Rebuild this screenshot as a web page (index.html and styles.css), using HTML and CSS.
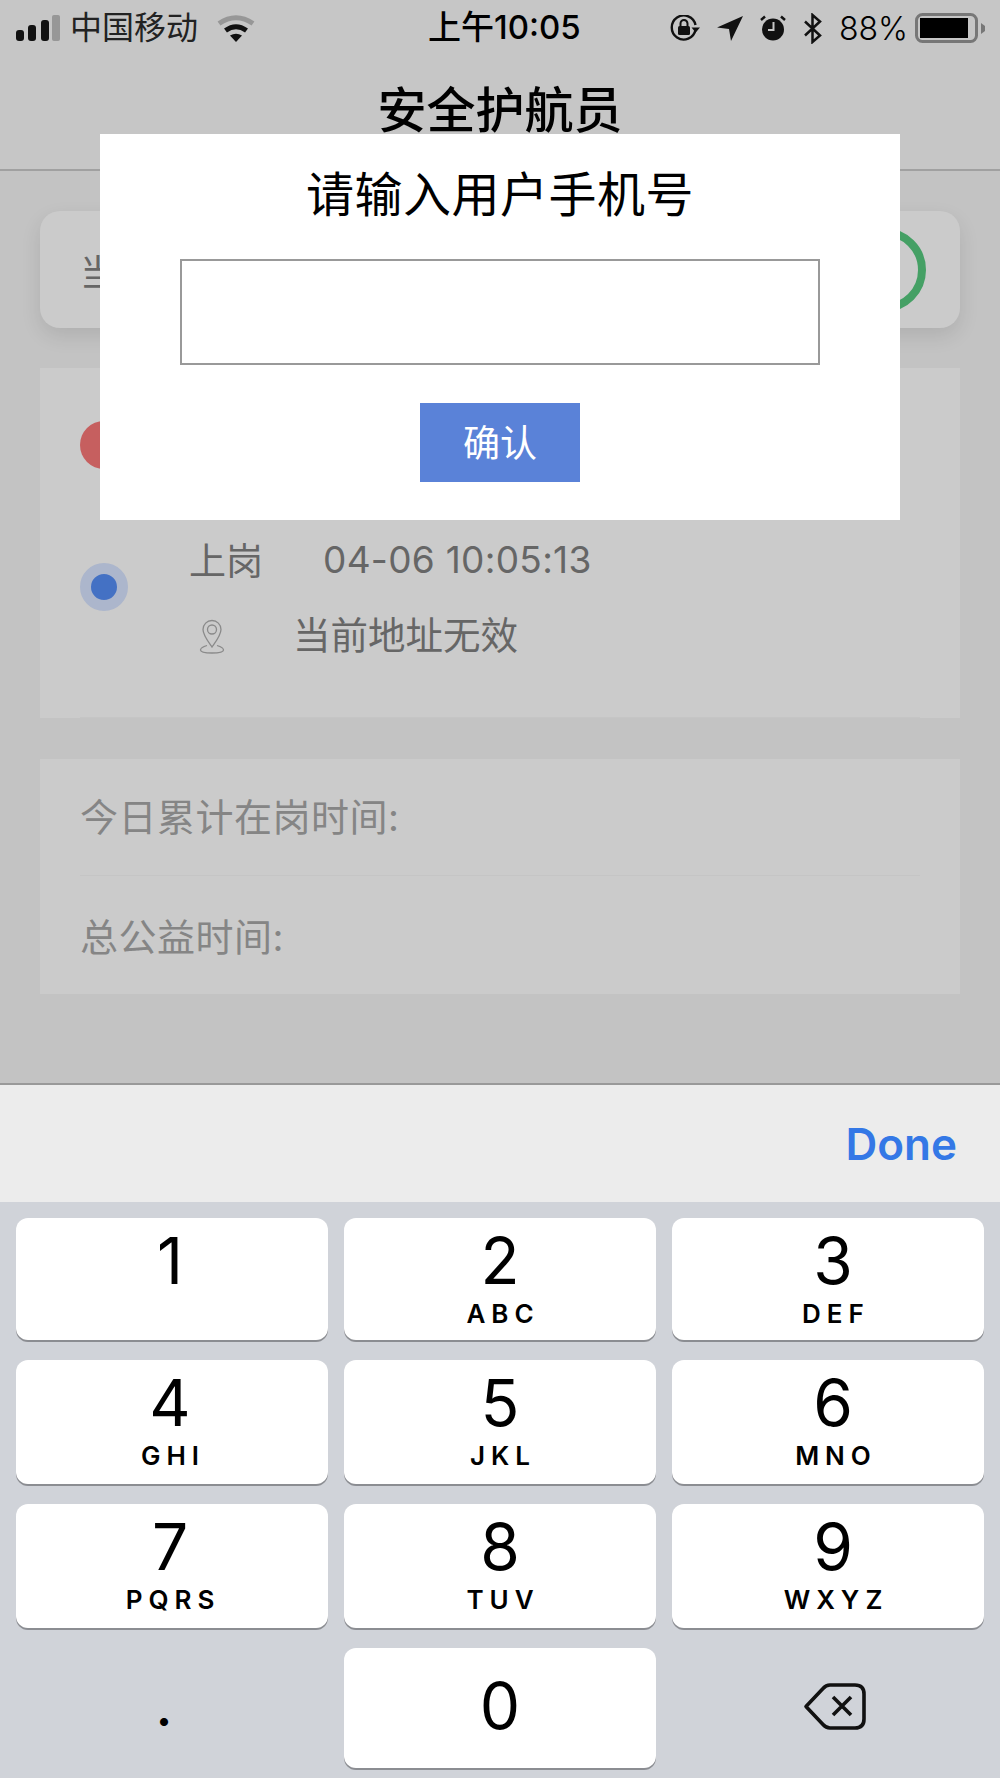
FILE: index.html
```html
<!DOCTYPE html>
<html lang="zh-CN">

<head>
    <meta charset="UTF-8">
    <meta name="viewport" content="width=device-width, initial-scale=1.0">
    <title>安全护航员</title>
    <link rel="stylesheet" href="styles.css">
</head>

<body>
    <div class="status-bar">
        <div class="status-left">
            <svg class="signal" width="44" height="26" viewBox="0 0 44 26">
                <rect x="0" y="15" width="8" height="11" rx="3" fill="#111"/>
                <rect x="12" y="10" width="8" height="16" rx="3" fill="#111"/>
                <rect x="25" y="5" width="8" height="21" rx="3" fill="#111"/>
                <rect x="36" y="0" width="8" height="26" rx="2" fill="#979797"/>
            </svg>
            <span class="carrier">中国移动</span>
            <svg class="wifi" width="38" height="27" viewBox="0 0 38 27">
                <path d="M2 8.500Q19 -3 36 8.500" fill="none" stroke="#979797" stroke-width="5"/>
                <path d="M8.500 15.500Q19 8 29.500 15.500" fill="none" stroke="#111" stroke-width="5"/>
                <path d="M13 20.500Q19 17 25 20.500L19 27Z" fill="#111"/>
            </svg>
        </div>
        <span class="clock">上午10:05</span>
        <div class="status-right">
            <svg width="30" height="26" viewBox="0 0 30 26">
                <path d="M25.500 15A12 12 0 1 1 25.500 10" fill="none" stroke="#111" stroke-width="2.400"/>
                <path d="M21.500 12.500H30L25.700 17.500Z" fill="#111"/>
                <rect x="8" y="11" width="12" height="9" rx="1.500" fill="#111"/>
                <path d="M10.500 11V8.500A3.500 3.500 0 0 1 17.500 8.500V11" fill="none" stroke="#111" stroke-width="2"/>
            </svg>
            <svg width="26" height="25" viewBox="0 0 26 25">
                <path d="M26 0L0 11.500L12 13L14 25Z" fill="#111"/>
            </svg>
            <svg width="26" height="26" viewBox="0 0 26 26">
                <circle cx="13" cy="14.500" r="11" fill="#111"/>
                <path d="M13.500 7V15H8" fill="none" stroke="#c6c6c6" stroke-width="2"/>
                <path d="M1 5L5 1.500M25 5L21 1.500" stroke="#111" stroke-width="2.500"/>
            </svg>
            <svg width="19" height="31" viewBox="0 0 19 31">
                <path d="M2 8.500L17 22.500L9.500 29V2L17 8.500L2 22.500" fill="none" stroke="#111" stroke-width="2.500"/>
            </svg>
            <span class="battery-text">88%</span>
            <svg width="70" height="30" viewBox="0 0 70 30">
                <rect x="1.500" y="1.500" width="60" height="27" rx="6" fill="none" stroke="#777" stroke-width="3"/>
                <rect x="5" y="5" width="48" height="20" fill="#000"/>
                <path d="M66 10L70 13V18L66 21Z" fill="#777"/>
            </svg>
        </div>
    </div>

    <header class="page-header">
        <h1>安全护航员</h1>
    </header>

    <main class="content">
        <section class="card card-state">
            <span class="state-label">当</span>
            <span class="state-ring"></span>
        </section>

        <section class="card card-log">
            <div class="log-row">
                <span class="log-dot log-dot-red"></span>
            </div>
            <div class="log-row log-row-last">
                <span class="log-dot log-dot-blue"></span>
                <div class="log-body">
                    <div class="log-line">
                        <span class="log-type">上岗</span>
                        <span class="log-time">04-06 10:05:13</span>
                    </div>
                    <div class="log-line">
                        <svg class="pin" width="26" height="36" viewBox="0 0 26 36">
                            <path d="M13 29C8 22 4 17 4 11.500A9 9 0 0 1 22 11.500C22 17 18 22 13 29Z" fill="none" stroke="#8a8a8a" stroke-width="1.300"/>
                            <circle cx="13" cy="11.500" r="4.500" fill="none" stroke="#8a8a8a" stroke-width="1.300"/>
                            <path d="M8 27.500C3 29 1.500 30.500 1.500 32C1.500 34 7 35 13 35C19 35 24.500 34 24.500 32C24.500 30.500 23 29 18 27.500" fill="none" stroke="#8a8a8a" stroke-width="1.300"/>
                        </svg>
                        <span class="log-address">当前地址无效</span>
                    </div>
                </div>
            </div>
        </section>

        <section class="card card-total">
            <div class="total-row">今日累计在岗时间:</div>
            <div class="total-row">总公益时间:</div>
        </section>
    </main>

    <div class="keyboard">
        <div class="keyboard-bar">
            <span class="done">Done</span>
        </div>
        <div class="keypad">
            <div class="key key-left"><span class="digit">1</span></div>
            <div class="key"><span class="digit">2</span><span class="letters">ABC</span></div>
            <div class="key key-right"><span class="digit">3</span><span class="letters">DEF</span></div>
            <div class="key key-left"><span class="digit">4</span><span class="letters">GHI</span></div>
            <div class="key"><span class="digit">5</span><span class="letters">JKL</span></div>
            <div class="key key-right"><span class="digit">6</span><span class="letters">MNO</span></div>
            <div class="key key-left"><span class="digit">7</span><span class="letters">PQRS</span></div>
            <div class="key"><span class="digit">8</span><span class="letters">TUV</span></div>
            <div class="key key-right"><span class="digit">9</span><span class="letters">WXYZ</span></div>
            <div class="key-plain key-dot">.</div>
            <div class="key key-zero"><span class="digit">0</span></div>
            <div class="key-plain key-back">
                <svg width="64" height="48" viewBox="0 0 64 48">
                    <path d="M3 24.500L20 6.500Q23 3 27 3H52Q61 3 61 12V37Q61 46 52 46H27Q23 46 20 42.500Z" fill="none" stroke="#111" stroke-width="3.600" stroke-linejoin="round"/>
                    <path d="M30 15L48 33M48 15L30 33" stroke="#111" stroke-width="3.600"/>
                </svg>
            </div>
        </div>
    </div>

    <div class="dialog">
        <div class="dialog-title">请输入用户手机号</div>
        <input class="dialog-input" type="tel">
        <button class="dialog-button" type="button">确认</button>
    </div>
</body>

</html>
```

FILE: styles.css
```css
* {
    box-sizing: border-box;
}

body {
    position: relative;
    display: flex;
    flex-direction: column;
    width: 1000px;
    height: 1778px;
    margin: 0;
    overflow: hidden;
    background-color: #c3c3c3;
    color: #000;
    font-family: Inter, "Noto Sans CJK SC", sans-serif;
}

.status-bar {
    display: grid;
    grid-template-columns: 428px auto 1fr;
    align-items: center;
    height: 56px;
    background-color: #c6c6c6;
    font-size: 32px;
}

.status-left {
    display: flex;
    align-items: center;
    padding-left: 16px;
}

.carrier {
    margin-left: 10px;
    color: #222;
    line-height: 40px;
}

.wifi {
    margin-left: 19px;
}

.clock {
    padding-bottom: 6px;
    font-weight: 500;
    font-size: 33px;
}

.status-right {
    display: flex;
    align-items: center;
    justify-content: flex-end;
    gap: 17px;
    padding-right: 15px;
}

.battery-text {
    font-weight: 300;
    font-size: 32px;
    margin-right: -10px;
}

.page-header {
    height: 115px;
    border-bottom: 2px solid #a0a0a0;
    background-color: #c6c6c6;
}

.page-header h1 {
    margin: 0;
    text-align: center;
    font-size: 49px;
    font-weight: 500;
    line-height: 110px;
}

.content {
    flex: 1;
    padding: 40px 40px 0;
}

.card {
    background-color: #cbcbcb;
}

.card-state {
    display: flex;
    align-items: center;
    justify-content: space-between;
    height: 117px;
    padding: 0 34px 0 40px;
    border-radius: 20px;
    box-shadow: 0 8px 20px rgba(0, 0, 0, 0.1);
}

.state-label {
    font-size: 36px;
    color: #666;
}

.state-ring {
    width: 84px;
    height: 84px;
    border: 8px solid #45a065;
    border-radius: 50%;
}

.card-log {
    height: 350px;
    margin-top: 40px;
    padding: 18px 40px 0;
}

.log-row {
    display: flex;
    height: 142px;
    padding-top: 35px;
}

.log-row-last {
    height: 190px;
    padding-top: 0;
    border-bottom: 1px solid #c5c5c5;
}

.log-dot {
    flex: none;
    width: 48px;
    height: 48px;
    border-radius: 50%;
}

.log-dot-red {
    background-color: #c65f5f;
}

.log-dot-blue {
    margin-top: 35px;
    border: 11px solid #acb6cc;
    background-color: #4471c4;
}

.log-body {
    display: flex;
    flex-direction: column;
    gap: 7px;
    margin-top: -3px;
    margin-left: 63px;
}

.log-line {
    display: flex;
    align-items: center;
    height: 68px;
    font-size: 37px;
    color: #666;
}

.log-type {
    width: 134px;
    margin-left: -2px;
}

.log-time {
    letter-spacing: 0.300px;
}

.log-address {
    margin-top: -4px;
    margin-left: 68px;
    font-size: 37.500px;
}

.pin {
    margin-left: 8px;
    margin-top: 4px;
}

.card-total {
    height: 235px;
    margin-top: 41px;
    padding: 0 40px;
}

.total-row {
    height: 117px;
    padding-top: 23px;
    font-size: 38px;
    line-height: 70px;
    letter-spacing: 0.500px;
    color: #858585;
}

.total-row:first-child {
    border-bottom: 1px solid #c5c5c5;
}

.total-row:last-child {
    padding-top: 26px;
}

.keyboard {
    border-top: 2px solid #999;
}

.keyboard-bar {
    display: flex;
    align-items: center;
    justify-content: flex-end;
    height: 117px;
    padding-right: 43px;
    background-color: #ececec;
}

.done {
    color: #3478e6;
    font-size: 44px;
    font-weight: 600;
}

.keypad {
    display: grid;
    grid-template-columns: repeat(3, 312px);
    grid-template-rows: 122px 124px 124px 120px;
    gap: 20px 16px;
    height: 576px;
    padding: 16px;
    background-color: #d0d3d9;
}

.key {
    display: flex;
    flex-direction: column;
    align-items: center;
    padding-top: 10px;
    border-radius: 12px;
    background-color: #fff;
    box-shadow: 0 2px 0 #8b8d92;
}

.key-left {
    padding-right: 4px;
}

.key-right {
    padding-left: 10px;
}

.digit {
    font-size: 64px;
    line-height: 66px;
}

.letters {
    margin-top: 5px;
    margin-right: -6px;
    font-size: 26px;
    font-weight: 600;
    line-height: 30px;
    letter-spacing: 6px;
}

.key-zero {
    justify-content: center;
    padding: 0 0 4px;
}

.key-plain {
    display: flex;
    align-items: center;
    justify-content: center;
    padding-bottom: 4px;
}

.key-back {
    padding-left: 14px;
}

.key-dot {
    padding: 0 16px 0 0;
    font-size: 48px;
    font-weight: 700;
}

.dialog {
    position: absolute;
    top: 134px;
    left: 100px;
    display: flex;
    flex-direction: column;
    align-items: center;
    width: 800px;
    height: 386px;
    padding-top: 26px;
    background-color: #fff;
}

.dialog-title {
    margin-bottom: 29px;
    font-size: 48px;
    line-height: 70px;
    letter-spacing: 0.500px;
}

.dialog-input {
    width: 640px;
    height: 106px;
    border: 2px solid #999;
    background-color: #fff;
}

.dialog-button {
    width: 160px;
    height: 79px;
    margin-top: 38px;
    padding: 0 0 4px;
    border: none;
    background-color: #5a82d8;
    color: #fff;
    font-family: inherit;
    font-size: 37px;
}
```
